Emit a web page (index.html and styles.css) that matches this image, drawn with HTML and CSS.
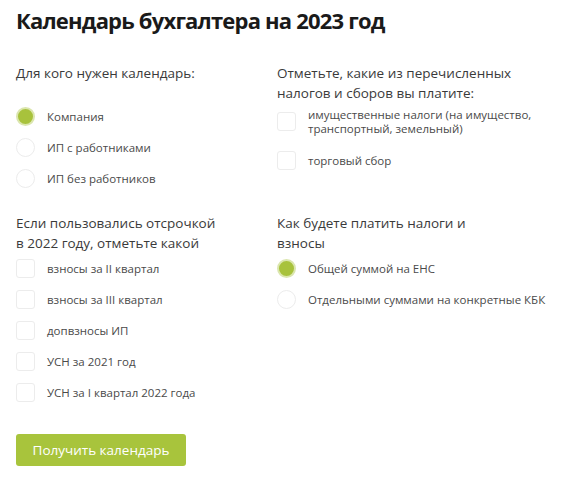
FILE: index.html
```html
<!DOCTYPE html>
<html lang="ru">
<head>
  <meta charset="UTF-8" />
  <meta name="viewport" content="width=device-width, initial-scale=1.0"/>
  <title>Календарь бухгалтера</title>
  <link rel="stylesheet" href="styles.css">
</head>
<body>

<section class="calendar-form">
  <h1>Календарь бухгалтера на 2023 год</h1>

  <div class="form-grid">
    <div class="group">
      <div class="group-title">Для кого нужен календарь:</div>
      <div class="list list-raised">
        <label class="option"><span class="radio checked"></span>Компания</label>
        <label class="option"><span class="radio"></span>ИП с работниками</label>
        <label class="option"><span class="radio"></span>ИП без работников</label>
      </div>
    </div>

    <div class="group">
      <div class="group-title">Отметьте, какие из перечисленных<br>налогов и сборов вы платите:</div>
      <div class="list list-spaced">
        <label class="option"><span class="check"></span><span>имущественные налоги (на имущество,<br>транспортный, земельный)</span></label>
        <label class="option"><span class="check"></span>торговый сбор</label>
      </div>
    </div>

    <div class="group">
      <div class="group-title">Если пользовались отсрочкой<br>в 2022 году, отметьте какой</div>
      <div class="list">
        <label class="option"><span class="check"></span>взносы за II квартал</label>
        <label class="option"><span class="check"></span>взносы за III квартал</label>
        <label class="option"><span class="check"></span>допвзносы ИП</label>
        <label class="option"><span class="check"></span>УСН за 2021 год</label>
        <label class="option"><span class="check"></span>УСН за I квартал 2022 года</label>
      </div>
    </div>

    <div class="group">
      <div class="group-title">Как будете платить налоги и<br>взносы</div>
      <div class="list">
        <label class="option"><span class="radio checked"></span>Общей суммой на ЕНС</label>
        <label class="option"><span class="radio"></span>Отдельными суммами на конкретные КБК</label>
      </div>
    </div>
  </div>

  <button class="submit-btn">Получить календарь</button>
</section>

</body>
</html>
```

FILE: styles.css
```css
* {
  box-sizing: border-box;
}

body {
  margin: 0;
  background: #fff;
  font-family: 'Open Sans', 'Liberation Sans', sans-serif;
  color: #333;
}

.calendar-form {
  padding: 6px 16px 0;
}

h1 {
  margin: 0;
  font-size: 22px;
  line-height: 28px;
  font-weight: 700;
  letter-spacing: -0.8px;
  color: #1a1a1a;
}

.form-grid {
  display: grid;
  grid-template-columns: 261px 1fr;
  row-gap: 19px;
  margin-top: 29px;
}

.group-title {
  font-size: 13.5px;
  line-height: 20px;
  color: #3a3a3a;
  min-height: 40px;
}

.list {
  display: flex;
  flex-direction: column;
}

.list-raised {
  margin-top: -2px;
}

.list-spaced {
  gap: 8px;
  margin-top: 3px;
}

.option {
  display: flex;
  align-items: center;
  min-height: 31px;
  font-size: 11.5px;
  line-height: 14px;
  color: #4a4a4a;
  cursor: pointer;
}

.radio,
.check {
  flex: none;
  width: 19px;
  height: 19px;
  margin-right: 12px;
  border: 1px solid #ececec;
  background: #fff;
}

.radio {
  border-radius: 50%;
}

.radio.checked {
  background: #a8c23c;
  border: 2px solid #dbe6ae;
}

.check {
  border-radius: 3px;
}

.submit-btn {
  margin-top: 26px;
  width: 170px;
  height: 32px;
  border: none;
  border-radius: 3px;
  background: #a8c43c;
  color: #fff;
  font-family: 'Open Sans', 'Liberation Sans', sans-serif;
  font-size: 13.5px;
  cursor: pointer;
}
```
